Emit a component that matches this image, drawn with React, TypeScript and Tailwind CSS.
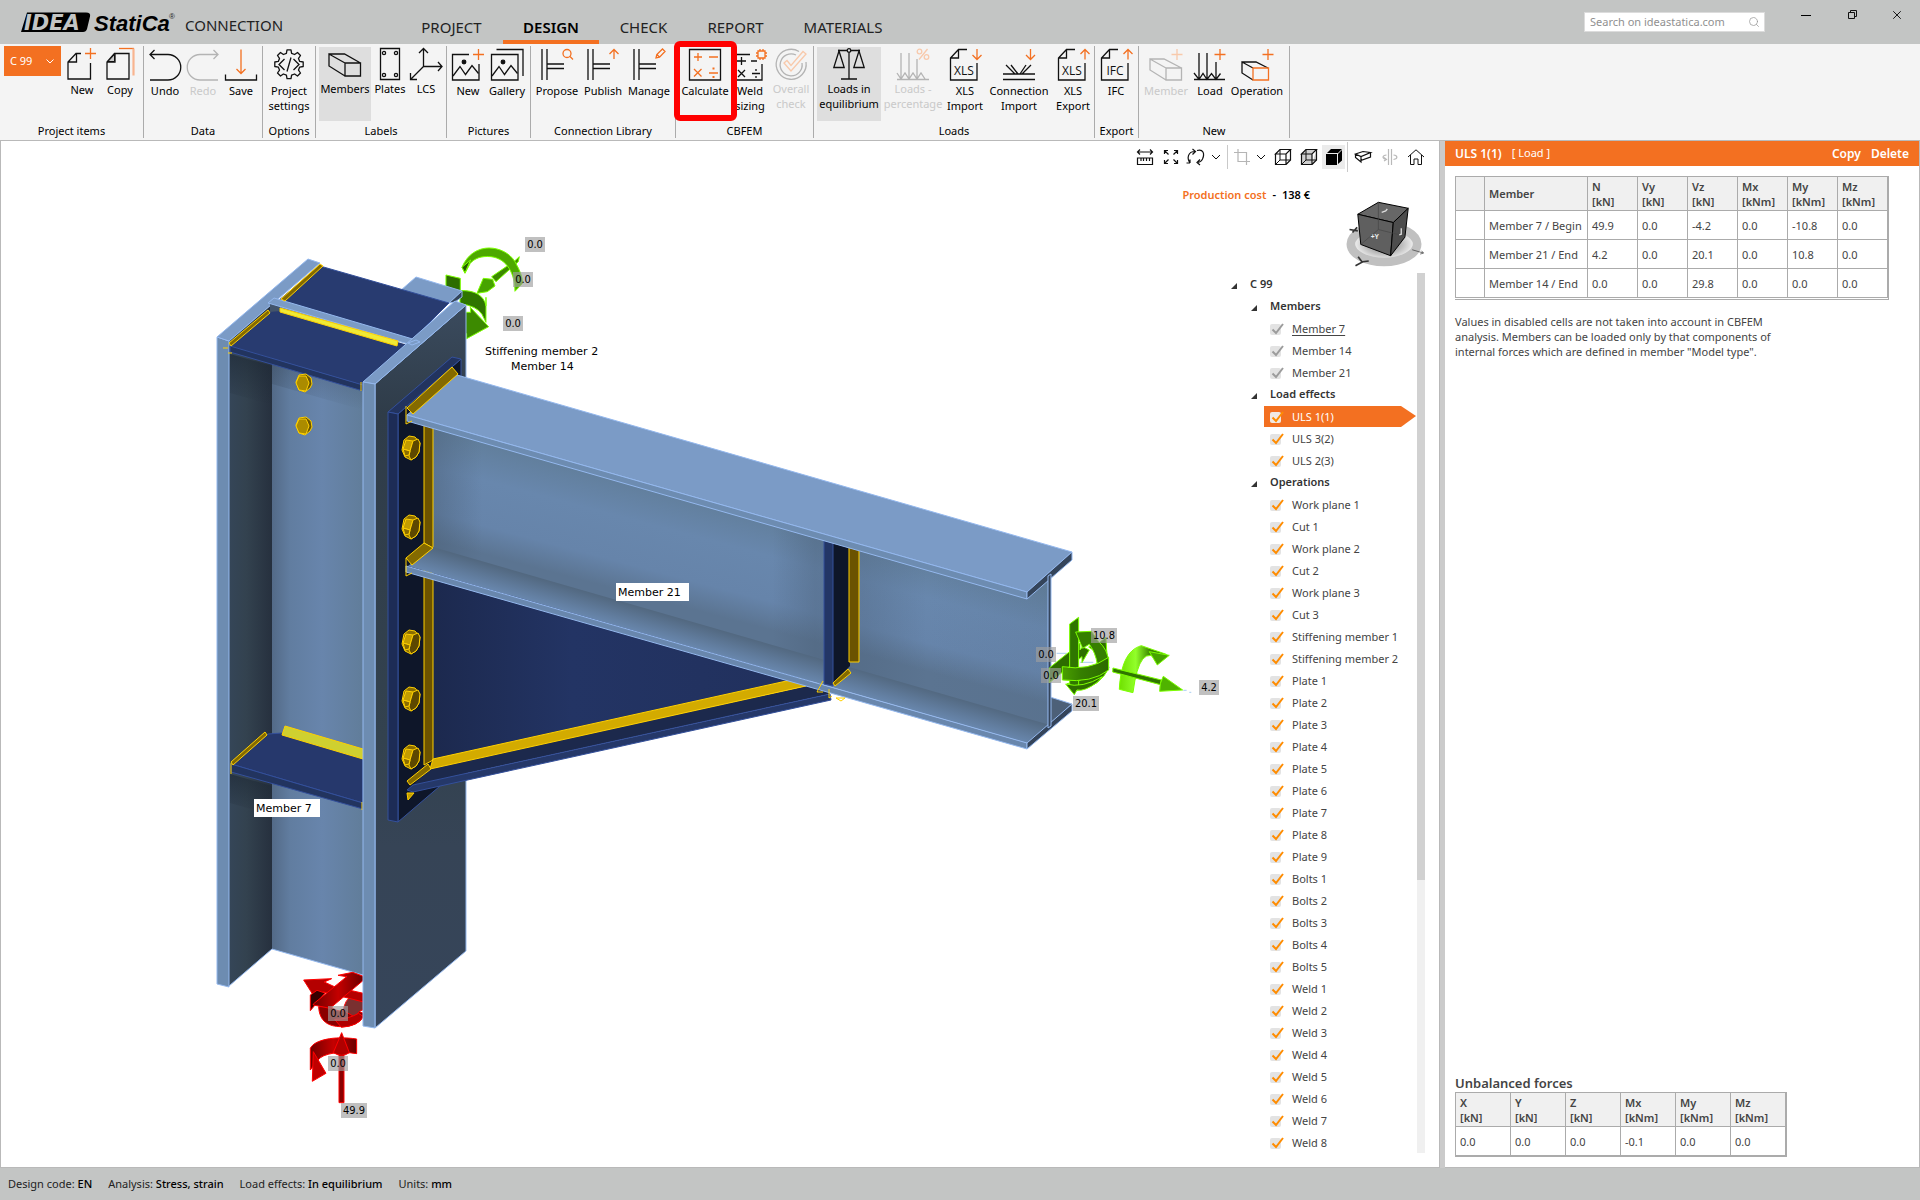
import React from "react";
import { Search, X } from "lucide-react";

const ORANGE = "#f37021";
const PALE = "#f8c9ab";

type Tool = {
  label: string[];
  width: string;
  icon: React.ReactNode;
  disabled?: boolean;
  active?: boolean;
  raised?: boolean;
};

type Group = { name: string; width: string; inset: string; tools: Tool[]; picker?: boolean };

function RibbonIcon({ children, muted }: { children: React.ReactNode; muted?: boolean }) {
  return (
    <svg
      viewBox="0 0 32 32"
      className="h-8 w-8 shrink-0 overflow-visible"
      fill="none"
      stroke={muted ? "#b4b4b4" : "#111"}
      strokeWidth="1.3"
      aria-hidden="true"
    >
      {children}
    </svg>
  );
}

const NewDoc = (
  <RibbonIcon>
    <path d="M15 5.5h-5L2 14v17h22.5V15M10.5 5.5V14H2" />
    <path stroke={ORANGE} d="M24.5 0v11M19 5.5h11" />
  </RibbonIcon>
);
const CopyDoc = (
  <RibbonIcon>
    <path d="M10.5 5.5H25V31H3V14zM11 5.5V14H3.5" />
    <path fill="#c9c9c9" strokeWidth="1" d="M10.5 6.5V13.5H4z" />
    <path stroke={ORANGE} d="M15 .5h15" />
    <path stroke="#f8b48f" strokeWidth="2.2" d="M29.5 .5v27" />
  </RibbonIcon>
);
const Undo = (
  <RibbonIcon>
    <path d="M1 5.5h18A12.75 12.75 0 0 1 19 31H1M5.5 1 1 5.5 5.5 10" />
  </RibbonIcon>
);
const Redo = (
  <RibbonIcon muted>
    <path d="M31 5.5H13A12.75 12.75 0 0 0 13 31H31M26.5 1 31 5.5 26.5 10" />
  </RibbonIcon>
);
const Save = (
  <RibbonIcon>
    <path d="M.5 25.5V31h31v-5.5" />
    <path stroke={ORANGE} d="M16 .5v24M11.5 20l4.5 4.5 4.5-4.5" />
  </RibbonIcon>
);
const Gear = (
  <RibbonIcon>
    <path
      strokeLinejoin="round"
      d="M13.4 4.3 14 .8h4l.6 3.5 3 1.2L24.5 3.5l3 3-2 2.9 1.2 3 3.5.6v4.5l-3.5.6-1.2 3 2 2.9-3 3-2.9-2-3 1.2-.6 3.5h-4l-.6-3.5-3-1.2-2.9 2-3-3 2-2.9-1.2-3-3.5-.6V13l3.5-.6 1.2-3-2-2.9 3-3 2.9 2z"
    />
    <path d="m11.5 10-5.5 5.5 5.5 5.5M20.5 10l5.5 5.5-5.5 5.5M18 8.5l-4 14" />
  </RibbonIcon>
);
const BeamIcon = (
  <RibbonIcon>
    <path d="M16 14h15.5v13H16zM16 14 0 5v12l16 10M0 5h15.5l16 9" />
  </RibbonIcon>
);
const Plates = (
  <RibbonIcon>
    <path d="M6.5-.5h19v31h-19z" />
    <circle cx="10" cy="4" r="1.6" />
    <circle cx="22" cy="4" r="1.6" />
    <circle cx="10" cy="26" r="1.6" />
    <circle cx="22" cy="26" r="1.6" />
  </RibbonIcon>
);
const Lcs = (
  <RibbonIcon>
    <path d="M13.5 0v17.5H32M13.5 17.5.5 30.5M9 4l4.5-4.5L18 4M28 13l4 4.5-4 4.5M.5 24v6.5H7" />
  </RibbonIcon>
);
const Mountains = "M1 27l7-9.5 5.5 8 6.5-9 6.5 8";
const NewPicture = (
  <RibbonIcon>
    <path d="M17 5.5H.5V31H27V15" />
    <path d={Mountains} />
    <circle cx="12" cy="13" r="1.8" fill="#111" />
    <path stroke={ORANGE} d="M26.5 0v11M21 5.5h11" />
  </RibbonIcon>
);
const Gallery = (
  <RibbonIcon>
    <path d="M.5 5.5H27V31H.5zM5.5 .5H32V27" />
    <path d={Mountains} />
    <circle cx="12" cy="13" r="1.8" fill="#111" />
  </RibbonIcon>
);
const Rails = "M1 0v31M6 0v31M6 15h17M6 19.5h17";
const Propose = (
  <RibbonIcon>
    <path d={Rails} />
    <circle cx="26" cy="4.5" r="4" stroke={ORANGE} />
    <path stroke={ORANGE} d="m29 7.5 3 3" />
  </RibbonIcon>
);
const Publish = (
  <RibbonIcon>
    <path d={Rails} />
    <path stroke={ORANGE} d="M27 10V.5M22.5 5 27 .5 31.5 5" />
  </RibbonIcon>
);
const Manage = (
  <RibbonIcon>
    <path d={Rails} />
    <path stroke={ORANGE} d="m23 9 .8-3.5L29.5 0l2.5 2.5-5.5 5.7zM24 5.5l2.5 2.7" />
  </RibbonIcon>
);
const Calculate = (
  <RibbonIcon>
    <path d="M.5 .5H31.5V31H.5z" />
    <g stroke={ORANGE}>
      <path d="M5 8h8M9 4v8M20 8h9M5 20l7.5 7.5M12.5 20 5 27.5M20 24h9" />
      <path d="M24.500 18.500v2M24.500 27v2" strokeWidth="2" />
    </g>
  </RibbonIcon>
);
const WeldSizing = (
  <RibbonIcon>
    <path d="M2 5.5h14M28 15v16H3M3 12h9M7.5 8v8M17 12h6M4 21l7 7M11 21l-7 7M18 24.5h8M22 20v2M22 27v2" />
    <path
      stroke={ORANGE}
      d="M24 2h7v7h-7zM26 2V0M29 2V0M26 9v2M29 9v2M24 4h-2M24 7h-2M31 4h2M31 7h2"
    />
  </RibbonIcon>
);
const Overall = (
  <RibbonIcon muted>
    <path d="M24 2.5A15 15 0 1 0 31 13M21 6A11 11 0 1 0 27 14" />
    <path stroke={PALE} d="m9 14 3-2.5 4 5L28 2.5l3 2.5-15 17z" />
  </RibbonIcon>
);
const Balance = (
  <RibbonIcon>
    <circle cx="16" cy="1.5" r="1.8" />
    <path d="M16 3.5V30M8 30h16M14 1.5H5M18 1.5h9M6 2 .8 18.5h10.4zM26 2l-5.2 16.5h10.4z" />
  </RibbonIcon>
);
const Percentage = (
  <RibbonIcon muted>
    <path d="M4 4v26M12 4v26M20 10v20M0 24l4 6 4-6 4 6 4-6 4 6 4-6 4 6M0 30.5h32" />
    <g stroke={PALE}>
      <circle cx="22.5" cy="2.5" r="2.3" />
      <circle cx="29.5" cy="8" r="2.3" />
      <path d="M30.5 0 22 10.5" />
    </g>
  </RibbonIcon>
);
function SheetIcon({ text, up }: { text: string; up?: boolean }) {
  return (
    <RibbonIcon>
      <path d="M18 .5h-8.5L1.500 9v22H28V14M9.5 .5V9h-8" />
      <path
        stroke={ORANGE}
        d={up ? "M28 10.5V.5M23.5 5 28 .5l4.5 4.5" : "M28 0v10.5M23.5 6l4.5 4.5L32.500 6"}
      />
      <text
        x="15"
        y="26"
        textAnchor="middle"
        fill="#111"
        stroke="none"
        className="font-['Open_Sans'] text-[12px]"
      >
        {text}
      </text>
    </RibbonIcon>
  );
}
const ConnImport = (
  <RibbonIcon>
    <path d="M0 25h32M0 30.5h32M3 16l9 9M8 16l7 9M28 16l-9 9M23 16l-6 9" />
    <path stroke={ORANGE} d="M27.5 0v10.500M23 6l4.5 4.5L32 6" />
  </RibbonIcon>
);
const NewMember = (
  <RibbonIcon muted>
    <path d="M16 19h15.5v12H16zM16 19 0 10v11l16 10M0 10h14l17.5 9" />
    <path stroke={PALE} d="M27 0v11M21.5 5.5h11" />
  </RibbonIcon>
);
const NewLoad = (
  <RibbonIcon>
    <path d="M5 4v26M13 4v26M22 13v17M0 24l5 6.5 4-6 4 6 4.5-6 4.5 6 4.5-6M0 30.5h31" />
    <path stroke={ORANGE} d="M26 0v11M20.5 5.5h11" />
  </RibbonIcon>
);
const NewOperation = (
  <RibbonIcon>
    <path d="m12 19-11-6v11l11 7M1 13h14l12 6" />
    <path stroke={ORANGE} d="M12 19h15.5v12H12zM27 0v11M21.5 5.5h11" />
  </RibbonIcon>
);

const groups: Group[] = [
  {
    name: "Project items",
    width: "w-36",
    inset: "pl-1",
    picker: true,
    tools: [
      { label: ["New"], width: "w-[38px]", icon: NewDoc },
      { label: ["Copy"], width: "w-[38px]", icon: CopyDoc },
    ],
  },
  {
    name: "Data",
    width: "w-[119px]",
    inset: "pl-[2px]",
    tools: [
      { label: ["Undo"], width: "w-[38px]", icon: Undo },
      { label: ["Redo"], width: "w-[38px]", icon: Redo, disabled: true },
      { label: ["Save"], width: "w-[38px]", icon: Save },
    ],
  },
  {
    name: "Options",
    width: "w-[53px]",
    inset: "pl-px",
    tools: [{ label: ["Project", "settings"], width: "w-[50px]", icon: Gear }],
  },
  {
    name: "Labels",
    width: "w-[131px]",
    inset: "pl-[3px]",
    tools: [
      { label: ["Members"], width: "w-[52px]", icon: BeamIcon, active: true, raised: true },
      { label: ["Plates"], width: "w-[38px]", icon: Plates, raised: true },
      { label: ["LCS"], width: "w-[34px]", icon: Lcs, raised: true },
    ],
  },
  {
    name: "Pictures",
    width: "w-[84px]",
    inset: "pl-[2px]",
    tools: [
      { label: ["New"], width: "w-[38px]", icon: NewPicture },
      { label: ["Gallery"], width: "w-[40px]", icon: Gallery },
    ],
  },
  {
    name: "Connection Library",
    width: "w-[145px]",
    inset: "pl-[3px]",
    tools: [
      { label: ["Propose"], width: "w-[46px]", icon: Propose },
      { label: ["Publish"], width: "w-[46px]", icon: Publish },
      { label: ["Manage"], width: "w-[46px]", icon: Manage },
    ],
  },
  {
    name: "CBFEM",
    width: "w-[138px]",
    inset: "pl-[3px]",
    tools: [
      { label: ["Calculate"], width: "w-[52px]", icon: Calculate },
      { label: ["Weld", "sizing"], width: "w-[38px]", icon: WeldSizing },
      { label: ["Overall", "check"], width: "w-[44px]", icon: Overall, disabled: true, raised: true },
    ],
  },
  {
    name: "Loads",
    width: "w-[281px]",
    inset: "pl-[3px]",
    tools: [
      { label: ["Loads in", "equilibrium"], width: "w-[64px]", icon: Balance, active: true, raised: true },
      { label: ["Loads -", "percentage"], width: "w-[64px]", icon: Percentage, disabled: true, raised: true },
      { label: ["XLS", "Import"], width: "w-[40px]", icon: <SheetIcon text="XLS" /> },
      { label: ["Connection", "Import"], width: "w-[68px]", icon: ConnImport },
      { label: ["XLS", "Export"], width: "w-[40px]", icon: <SheetIcon text="XLS" up /> },
    ],
  },
  {
    name: "Export",
    width: "w-[44px]",
    inset: "pl-px",
    tools: [{ label: ["IFC"], width: "w-[40px]", icon: <SheetIcon text="IFC" up /> }],
  },
  {
    name: "New",
    width: "w-[151px]",
    inset: "pl-1",
    tools: [
      { label: ["Member"], width: "w-[46px]", icon: NewMember, disabled: true },
      { label: ["Load"], width: "w-[42px]", icon: NewLoad },
      { label: ["Operation"], width: "w-[52px]", icon: NewOperation },
    ],
  },
];

function ToolButton({ tool }: { tool: Tool }) {
  return (
    <button
      type="button"
      disabled={tool.disabled}
      className={`flex h-[74px] shrink-0 flex-col items-center pt-[2px] ${tool.width} ${
        tool.active ? "bg-[#dedede]" : ""
      } ${tool.raised ? "gap-0" : "gap-[2px]"}`}
    >
      {tool.icon}
      <span
        className={`text-center leading-[15px] whitespace-nowrap ${
          tool.disabled ? "text-[#c9c9c9]" : "text-black"
        }`}
      >
        {tool.label.map((line) => (
          <span key={line} className="block">
            {line}
          </span>
        ))}
      </span>
    </button>
  );
}

function Ribbon() {
  return (
    <nav aria-label="Ribbon" className="flex h-24 shrink-0 bg-[#f4f4f4] pt-[2px] text-[11px]">
      {groups.map((g, i) => (
        <section
          key={i}
          aria-label={g.name}
          className={`flex h-[92px] shrink-0 flex-col justify-between border-r border-[#ababab] ${g.width}`}
        >
          <div className={`relative flex ${g.inset} ${g.picker ? "" : "pt-px"}`}>
            {g.picker && (
              <button
                type="button"
                className="mr-[2px] flex h-[30px] w-[57px] items-center justify-between bg-[#f37021] pr-[7px] pl-[6px] text-[11px] text-white"
              >
                C 99
                <svg viewBox="0 0 8 5" className="h-[5px] w-2" fill="none" stroke="white" aria-hidden="true">
                  <path d="m.5 .5 3.5 3.5L7.5 .5" />
                </svg>
              </button>
            )}
            {g.tools.map((t) => (
              <ToolButton key={t.label.join(" ")} tool={t} />
            ))}
            {g.name === "CBFEM" && (
              <div className="pointer-events-none absolute -top-[5px] -left-[2px] h-20 w-[63px] rounded-md border-[6px] border-[#ff0000]" />
            )}
          </div>
          <h2 className="text-center leading-[15px] whitespace-nowrap">{g.name}</h2>
        </section>
      ))}
    </nav>
  );
}

function Logo() {
  return (
    <svg viewBox="0 0 156 24" className="h-6 w-[156px] shrink-0" role="img" aria-label="IDEA StatiCa">
      <path d="M7 2.5h59q5 0 4 4L67 19q-1 3-4 3H1z" fill="#000" />
      <text x="4" y="20" fill="#c3c5c4" className="font-['DejaVu_Sans'] text-[21px] font-bold italic">
        IDEA
      </text>
      <text x="74" y="21" fill="#000" className="font-['Liberation_Sans'] text-[22px] font-bold italic">
        StatiCa
      </text>
      <text x="149" y="9" fill="#222" className="font-['Liberation_Sans'] text-[8px]">
        ®
      </text>
    </svg>
  );
}

const tabs: { name: string; width: string }[] = [
  { name: "PROJECT", width: "w-[103px]" },
  { name: "DESIGN", width: "w-24" },
  { name: "CHECK", width: "w-[89px]" },
  { name: "REPORT", width: "w-[95px]" },
  { name: "MATERIALS", width: "w-[120px]" },
];

function Header() {
  return (
    <header className="flex h-11 shrink-0 items-stretch bg-[#c3c5c4]">
      <div className="flex w-[400px] shrink-0 items-center gap-[9px] pl-5">
        <Logo />
        <h1 className="pt-[6px] text-[15px] leading-5 text-[#222]">CONNECTION</h1>
      </div>
      <div role="tablist" className="flex">
        {tabs.map((t) => (
          <button
            key={t.name}
            type="button"
            role="tab"
            aria-selected={t.name === "DESIGN"}
            className={`border-b-4 pt-[14px] text-[15px] leading-5 text-[#222] ${t.width} ${
              t.name === "DESIGN" ? "border-[#f37021] font-semibold text-black" : "border-transparent"
            }`}
          >
            {t.name}
          </button>
        ))}
      </div>
      <div className="ml-auto flex items-start">
        <label className="mt-3 flex h-5 w-[181px] items-center border border-[#dcdcdc] bg-white pr-1 pl-[5px]">
          <span className="sr-only">Search</span>
          <input
            type="text"
            placeholder="Search on ideastatica.com"
            className="h-[18px] w-0 flex-1 text-[11px] leading-[18px] outline-none placeholder:text-[#909090]"
          />
          <Search size={12} strokeWidth={1.5} className="text-[#999]" />
        </label>
        <button type="button" aria-label="Minimize" className="mt-2 ml-[33px] flex w-4 justify-center">
          <svg viewBox="0 0 10 14" className="h-[14px] w-[10px]" stroke="#000">
            <path d="M0 7.5h10" />
          </svg>
        </button>
        <button type="button" aria-label="Restore" className="mt-2 ml-[30px] flex w-4 justify-center">
          <svg viewBox="0 0 10 14" className="h-[14px] w-[10px]" fill="none" stroke="#111">
            <path d="M1.5 4.5h6v6h-6zM3.5 4.5v-2h6v6h-2" />
          </svg>
        </button>
        <button type="button" aria-label="Close" className="mt-2 mr-[15px] ml-[29px] flex w-4 justify-center">
          <X size={14} strokeWidth={1.5} />
        </button>
      </div>
    </header>
  );
}

/* ---------- 3D scene ---------- */

const EDGE = "#94b8ee";
const NAVY_EDGE = "#34509b";
const GOLD = "#ffd000";

function Poly({ p, f, s, w = 1, o }: { p: string; f: string; s?: string; w?: number; o?: number }) {
  return <polygon points={p} fill={f} stroke={s ?? "none"} strokeWidth={w} opacity={o} />;
}

function RoundBolt({ y }: { y: number }) {
  return (
    <g transform={`translate(304 ${y})`}>
      <Poly p="-8,-1 -5,-8 2,-9 7,-5 8,1 6,5 1,9 -5,7" f="#6a5400" s={GOLD} />
      <Poly p="-8,0 -5,-7 2,-7 5,0 2,8 -5,7" f="#ab8b00" s={GOLD} />
    </g>
  );
}

function HexBolt({ y }: { y: number }) {
  return (
    <g transform={`translate(411 ${y})`}>
      <Poly p="-9,2 -7,-8 -2,-12 4,-11 9,-5 8,4 5,9 0,12 -6,9" f="#8a6d00" s={GOLD} />
      <Poly p="-8,1 -5,-8 2,-7 -1,3" f="#c39d00" s={GOLD} />
      <Poly p="-1,3 2,-7 7,-9 9,-5 8,4 5,9 0,12 -2,8" f="#5d4800" s={GOLD} />
      <Poly p="-8,1 -1,3 -2,7 -6,8" f="#8a6d00" s={GOLD} />
    </g>
  );
}

function ForceTag({ x, y, w = 20, children }: { x: number; y: number; w?: number; children: string }) {
  return (
    <g>
      <rect x={x} y={y} width={w} height="15" fill="#9e9e9e" fillOpacity=".65" />
      <text
        x={x + w / 2}
        y={y + 11}
        textAnchor="middle"
        fill="#000"
        className="font-['DejaVu_Sans_Condensed','DejaVu_Sans'] text-[11px]"
      >
        {children}
      </text>
    </g>
  );
}

function MemberTag({ x, y, w, children }: { x: number; y: number; w?: number; children: string }) {
  return (
    <g>
      {w && <rect x={x - 2} y={y - 13} width={w} height="18" fill="#fff" />}
      <text x={x} y={y} fill="#000" className="font-['DejaVu_Sans'] text-[11px]">
        {children}
      </text>
    </g>
  );
}

function Scene() {
  return (
    <svg
      viewBox="1 141 1240 1026"
      className="absolute top-0 left-0 h-[1026px] w-[1240px]"
      role="img"
      aria-label="Steel connection model"
    >
      <defs>
        <linearGradient id="colWeb" x1="0" x2="1">
          <stop offset="0" stopColor="#536a87" />
          <stop offset=".2" stopColor="#617da0" />
          <stop offset=".55" stopColor="#6885ac" />
          <stop offset="1" stopColor="#617d9a" />
        </linearGradient>
        <linearGradient id="colFlange" x1="0" x2="1">
          <stop offset="0" stopColor="#354658" />
          <stop offset=".4" stopColor="#33424f" />
          <stop offset="1" stopColor="#26303e" />
        </linearGradient>
        <linearGradient id="shade" x1="0" x2="0" y1="0" y2="1">
          <stop offset="0" stopColor="#1c2733" stopOpacity=".6" />
          <stop offset="1" stopColor="#1c2733" stopOpacity="0" />
        </linearGradient>
        <linearGradient id="outer" x1="0" x2="0" y1="0" y2="1">
          <stop offset="0" stopColor="#3b4b5e" />
          <stop offset=".15" stopColor="#2f3c49" />
          <stop offset=".6" stopColor="#33424f" />
          <stop offset=".75" stopColor="#364456" />
          <stop offset="1" stopColor="#36455a" />
        </linearGradient>
        <linearGradient id="web" gradientUnits="userSpaceOnUse" x1="640" y1="482" x2="612" y2="588">
          <stop offset="0" stopColor="#617e9b" />
          <stop offset=".35" stopColor="#6887ad" />
          <stop offset=".75" stopColor="#6684aa" />
          <stop offset="1" stopColor="#5b7491" />
        </linearGradient>
        <linearGradient id="webEnds" gradientUnits="userSpaceOnUse" x1="433" y1="0" x2="1050" y2="0">
          <stop offset="0" stopColor="#4b6078" stopOpacity=".5" />
          <stop offset=".08" stopColor="#4b6078" stopOpacity="0" />
          <stop offset=".55" stopColor="#4b6078" stopOpacity="0" />
          <stop offset=".62" stopColor="#4b6078" stopOpacity=".4" />
          <stop offset=".7" stopColor="#4b6078" stopOpacity=".3" />
          <stop offset=".8" stopColor="#4b6078" stopOpacity="0" />
          <stop offset="1" stopColor="#4b6078" stopOpacity=".1" />
        </linearGradient>
        <linearGradient id="lowFlange" gradientUnits="userSpaceOnUse" x1="640" y1="607" x2="632" y2="635">
          <stop offset="0" stopColor="#526880" />
          <stop offset="1" stopColor="#6d8db6" />
        </linearGradient>
        <linearGradient id="haunch" x1="0" x2="1">
          <stop offset="0" stopColor="#1c294e" />
          <stop offset=".35" stopColor="#233464" />
          <stop offset="1" stopColor="#21305c" />
        </linearGradient>
        <linearGradient id="green" x1="0" x2="1">
          <stop offset="0" stopColor="#4a9f00" />
          <stop offset=".4" stopColor="#357f00" />
          <stop offset="1" stopColor="#2c6a00" />
        </linearGradient>
        <linearGradient id="greenHoop" x1="0" x2="1">
          <stop offset="0" stopColor="#6fe000" />
          <stop offset=".35" stopColor="#92ff2a" />
          <stop offset=".65" stopColor="#3c8a00" />
          <stop offset="1" stopColor="#2c6a00" />
        </linearGradient>
        <linearGradient id="red" x1="0" x2="1">
          <stop offset="0" stopColor="#700000" />
          <stop offset=".5" stopColor="#c40000" />
          <stop offset="1" stopColor="#6a0000" />
        </linearGradient>
      </defs>

      {/* load arrows behind the column */}
      <g transform="translate(200 230) scale(.3333)" stroke="#7cff00" strokeWidth="3" strokeLinejoin="round">
        <path d="M738 135l43 10v60l-43-12z" fill="#2d6d00" />
        <path d="M945 92 958 80 955 95 888 155 875 140z" fill="#3c8a00" />
        <path d="M831 190 850 145 878 148 885 168 862 185z" fill="#47a300" />
        <path d="M786 112C820 30 915 45 945 95q26 45 22 66l-22 23c0-50-22-98-72-104-30-3-50 6-62 20l-16 30z" fill="#4da900" />
        <path d="M786 112 812 90 795 128z" fill="#255900" />
        <path d="M780 182c45-2 72 15 78 45v-25 75l-12-24q-15-25-66-32z" fill="#2f7600" />
        <path d="M796 247h16l-1-15 55 58-66 36v-15h-10z" fill="#3c8a00" />
      </g>

      {/* member 14 behind the column */}
      <Poly p="400,291 416,277 462,291 449,303" f="#7b9bc6" s={EDGE} />
      <Poly p="449,303 462,291 462,297 455,302" f="#34445a" s={EDGE} />

      {/* column, left flange and web */}
      <Poly p="229,341 272,304 272,949 229,986" f="url(#colFlange)" />
      <Poly p="272,300 363,330 363,975 272,949" f="url(#colWeb)" />
      <path d="M229 986 272 949 363 975" fill="none" stroke={EDGE} />
      <Poly p="230,354 272,366 272,405 230,393" f="url(#shade)" />
      <Poly p="230,774 272,786 272,815 230,803" f="url(#shade)" />
      <Poly p="272,364 363,391 363,410 272,384" f="url(#shade)" o={0.4} />
      <Poly p="217,337 229,341 229,987 217,984" f="#6d8cb1" s={EDGE} />
      <Poly p="217,337 308,259 320,263 229,341" f="#7b9bc6" s={EDGE} />

      {/* top stiffeners */}
      <Poly p="320,266 449,303 412,340 278,301" f="#283b70" s={NAVY_EDGE} />
      <Poly p="268,311 282,309 408,345 363,385 230,346" f="#283b70" />
      <Poly p="230,346 363,385 363,391 230,352" f="#22345f" s={NAVY_EDGE} />
      <Poly p="270,304 280,303 280,311 270,312" f="#43546b" />
      <Poly p="274,298 416,340 408,344 268,303" f="#7b9bc6" s={EDGE} />
      <Poly p="320,264 323,266 285,301 281,299" f="#846a00" s={GOLD} />
      <Poly p="229,343 268,310 270,313 231,346" f="#846a00" s={GOLD} />
      <Poly p="280,308 398,341 397,346 280,312" f="#f0ea35" s={GOLD} />
      <path d="M223 348h5M228 353h4M361 382v9M366 388h4" stroke={GOLD} fill="none" />

      <RoundBolt y={383} />
      <RoundBolt y={426} />

      {/* lower stiffener */}
      <Poly p="231,764 268,734 282,733 363,757 363,803" f="#26386c" s={NAVY_EDGE} />
      <Poly p="231,764 363,803 363,809 231,772" f="#22345f" s={NAVY_EDGE} />
      <Poly p="231,762 265,732 267,735 233,765" f="#846a00" s={GOLD} />
      <Poly p="285,726 363,749 363,759 282,735" f="#cfd030" s={GOLD} />
      <path d="M231 763v11M362 802v8" stroke={GOLD} />

      {/* reaction arrows */}
      <g transform="translate(200 880) scale(.3333)" stroke="#ff0000" strokeWidth="3" strokeLinejoin="round">
        <path d="M356 380c2 45 30 60 68 60 45 0 66-22 66-40l-48-22q-15 30-50 2z" fill="#8a0000" />
        <path d="M430 392q5-35 25-42l35 14v25q-20 5-20 25z" fill="#7a3030" />
        <path d="M404 418q40 0 72-18l14 10q-14 28-66 32z" fill="#b00000" />
        <path d="M311 300l84-4-22 10 30 14 87 20v26l-62-16-58-14-25 18-5-8z" fill="#b40000" />
        <path d="M331 392v-47l20-14 24 8z" fill="#380000" />
        <path d="M340 372 440 290l-26-4 44-9 32 12v12l-100 84-50-10z" fill="url(#red)" />
        <path d="M331 570v-65c12-25 70-38 139-28v44c-50-8-100-2-117 20z" fill="url(#red)" />
        <path d="M340 515 378 580 337 604z" fill="#c00000" />
        <path d="M417 520h15v148h-15z" fill="#8c0000" />
        <path d="M425 458 448 518q-22 16-48 0z" fill="#b00000" />
      </g>

      {/* column, right flange */}
      <Poly p="375,384 466,305 466,951 375,1028" f="url(#outer)" s={EDGE} />
      <Poly p="363,382 455,301 466,305 375,384" f="#7b9bc6" s={EDGE} />
      <Poly p="363,382 375,384 375,1028 363,1026" f="#6d8cb1" s={EDGE} />
      <Poly p="408,343 416,340 420,342 412,345" f="#7b9bc6" s={EDGE} />

      {/* end plate */}
      <Poly p="398,414 461,359 461,768 398,822" f="#0e1629" s={NAVY_EDGE} />
      <Poly p="388,412 452,357 461,359 398,414" f="#22335f" s={NAVY_EDGE} />
      <Poly p="388,412 398,414 398,822 388,820" f="#1d2c56" s={NAVY_EDGE} />

      {/* haunch */}
      <Poly p="433,570 830,685 815,680 433,762" f="url(#haunch)" />
      <Poly p="430,768 820,683 830,694 413,785" f="#1c294c" />
      <Poly p="413,785 830,694 831,700 413,792 407,790" f="#253869" s={NAVY_EDGE} />
      <Poly p="424,570 433,573 433,760 424,765" f="#6b5300" s={GOLD} />
      <Poly p="433,759 800,678 806,686 430,769" f="#d3ab00" s={GOLD} />
      <Poly p="407,781 428,764 431,769 410,785" f="#846a00" s={GOLD} />
      <Poly p="407,793 414,793 408,800" f="#c39d00" s={GOLD} />

      {/* beam web */}
      <Poly p="433,425 1027,590 1050,572 1050,726 433,548" f="url(#web)" />
      <Poly p="433,425 1027,590 1050,572 1050,726 433,548" f="url(#webEnds)" />
      <Poly p="424,420 433,423 433,548 424,543" f="#6b5300" s={GOLD} />

      {/* beam bottom flange */}
      <Poly p="1050,697 1072,704 1049,725" f="#4d6078" s={EDGE} />
      <Poly p="408,566 433,547 1050,725 1027,743" f="url(#lowFlange)" />
      <Poly p="406,566 1027,743 1027,749 406,572" f="#6987ad" s={EDGE} />
      <Poly p="1027,743 1072,704 1072,711 1027,749" f="#34445a" s={EDGE} />
      <Poly p="406,558 424,543 433,548 412,565" f="#846a00" s={GOLD} />
      <path d="M406 558v18l6-3" stroke={GOLD} fill="none" />

      {/* beam stiffener */}
      <Poly p="833,541 850,546 850,666 833,684" f="#0e1629" />
      <Poly p="849,546 859,549 859,662 849,662" f="#6b5300" s={GOLD} />
      <Poly p="824,540 833,542 833,686 824,684" f="#233666" s={NAVY_EDGE} />
      <Poly p="833,683 848,669 851,673 835,686" f="#846a00" s={GOLD} />
      <path d="M823 681l-6 11h6M829 689v9l3-2M836 698h9l-4 3z" stroke={GOLD} fill="none" />

      {/* beam top flange */}
      <Poly p="407,415 457,375 1072,552 1027,592" f="#7b9bc6" s={EDGE} />
      <Poly p="407,415 1027,592 1027,599 407,421" f="#6d8cb1" s={EDGE} />
      <Poly p="1027,592 1072,552 1072,560 1027,599" f="#34445a" s={EDGE} />
      <Poly p="1048,576 1051,574 1051,726 1048,728" f="#34445a" s={EDGE} />
      <Poly p="407,408 452,367 458,374 413,414" f="#846a00" s={GOLD} />
      <path d="M406 406v18l6-3" stroke={GOLD} fill="none" />

      <HexBolt y={448} />
      <HexBolt y={527} />
      <HexBolt y={642} />
      <HexBolt y={699} />
      <HexBolt y={757} />

      {/* beam end loads */}
      <g transform="translate(780 500) scale(.3333)" stroke="#7cff00" strokeWidth="3" strokeLinejoin="round">
        <path d="M830 460h30M900 487h40M970 502h20M1210 571h10M1228 577h6" stroke="#a9cdf0" />
        <path d="M808 504 900 430v20l8-10 20 10-22 38v-18l-98 78z" fill="#2d6d00" />
        <path d="M955 430 978 412 980 450 986 505q-25 55-95 66l-30-20q60-5 90-60 12-30-25-50z" fill="#2d6d00" />
        <path d="M869 372 896 352V560h-27z" fill="#2f7600" />
        <path d="M887 396l48-2 20 30q30 25 31 65l-34 4q-5-35-24-60l-20 12z" fill="#357f00" />
        <path d="M847 500q80 14 139-28v38q-50 40-139 30z" fill="url(#green)" />
        <path d="M857 552q50 14 110-22l-14 16q-40 30-62 24l-8 14z" fill="#2d6d00" />
        <path d="M1018 568c4-70 22-118 66-131l75 26-20 20q-60-60-80 95z" fill="url(#greenHoop)" />
        <path d="M1108 455l60 11-36 29z" fill="#47a300" />
        <path d="M999 504l145 36-3 14-143-38z" fill="#2f7600" />
        <path d="M1150 529l58 41-69 4q-1-25 11-45z" fill="#4fb300" />
      </g>

      <ForceTag x={525} y={237}>0.0</ForceTag>
      <ForceTag x={513} y={272}>0.0</ForceTag>
      <ForceTag x={503} y={316}>0.0</ForceTag>
      <ForceTag x={1036} y={647}>0.0</ForceTag>
      <ForceTag x={1041} y={668}>0.0</ForceTag>
      <ForceTag x={1091} y={628} w={26}>10.8</ForceTag>
      <ForceTag x={1073} y={696} w={26}>20.1</ForceTag>
      <ForceTag x={1199} y={680}>4.2</ForceTag>
      <ForceTag x={328} y={1006}>0.0</ForceTag>
      <ForceTag x={328} y={1056}>0.0</ForceTag>
      <ForceTag x={341} y={1103} w={26}>49.9</ForceTag>

      <MemberTag x={485} y={355}>Stiffening member 2</MemberTag>
      <MemberTag x={511} y={370}>Member 14</MemberTag>
      <MemberTag x={618} y={596} w={73}>Member 21</MemberTag>
      <MemberTag x={256} y={812} w={66}>Member 7</MemberTag>
    </svg>
  );
}

/* ---------- view toolbar ---------- */

function ViewButton({
  label,
  width,
  active,
  children,
}: {
  label: string;
  width: string;
  active?: boolean;
  children: React.ReactNode;
}) {
  return (
    <button
      type="button"
      aria-label={label}
      className={`flex h-6 items-center justify-center ${width} ${active ? "bg-[#ebebeb]" : ""}`}
    >
      <svg viewBox="0 0 16 16" className="h-4 w-4 overflow-visible" fill="none" stroke="#111" strokeWidth="1.2" aria-hidden="true">
        {children}
      </svg>
    </button>
  );
}

const CubeLines = "M.5 5 5 .5h10.5L11 5zM11 5v10.5H.5V5M11 15.5l4.5-4.5V.5";

function ViewToolbar() {
  return (
    <div className="relative flex h-8 items-center pr-[10px]">
      <ViewButton label="Measure" width="w-[26px]">
        <path d="M0 3h16M3 .5.5 3 3 5.5M13 .5 15.5 3 13 5.5M.5 9h15v6.5H.5zM4 9v3M6.5 9v3M9.5 9v3M12.5 9v3" />
      </ViewButton>
      <ViewButton label="Fit to window" width="w-[26px]">
        <path d="M1.500 5v-3.500h3.500M1.500 1.500l4 4M11 1.500h3.500v3.500M14.500 1.500l-4 4M1.500 11v3.500h3.500M1.500 14.500l4-4M14.500 11v3.500h-3.500M14.500 14.500l-4-4" />
      </ViewButton>
      <ViewButton label="Rotate" width="w-[23px]">
        <path d="M2 14C-1.500 9 0 2.500 7 2.500M4.500 0l3 2.500L4.500 5.500M9 1.500c6-2 8 3 5.500 8.500-1 2-3 3.500-5.500 3.500M2 14H-1.500M2 14v-3.500M12 16l-3-2.500 3-3" />
      </ViewButton>
      <ViewButton label="Rotate options" width="w-[18px]">
        <path strokeWidth="1" d="m4 6 4 4 4-4" />
      </ViewButton>
      <span className="mr-[2px] ml-[2px] h-6 w-px bg-[#c9c9c9]" />
      <ViewButton label="Clip" width="w-[24px]">
        <path stroke="#b5b5b5" d="M4 0v12.5h12M0 3.500h12.5V16" />
      </ViewButton>
      <ViewButton label="Clip options" width="w-[16px]">
        <path strokeWidth="1" d="m3 6 4 4 4-4" />
      </ViewButton>
      <ViewButton label="Wireframe" width="w-[26px]">
        <path d={CubeLines} />
        <path strokeWidth="1" d="M5 .5V11H15.5M5 11 .5 15.5" />
      </ViewButton>
      <ViewButton label="Transparent" width="w-[26px]">
        <path fill="#d0d0d0" d={CubeLines} />
        <path strokeWidth="1" d="M5 .5V11H15.5M5 11 .5 15.5" />
      </ViewButton>
      <ViewButton label="Solid" width="w-[23px]" active>
        <path fill="#000" stroke="none" d="M0 5h11v11H0zM1 4 5 0h11l-4 4zM12 5l4-4v10.5L12 15z" />
      </ViewButton>
      <span className="ml-[2px] h-[30px] w-px bg-[#c9c9c9]" />
      <ViewButton label="Member view" width="w-[29px]">
        <path d="M.5 5 8 2.500l7.500 1L6 7.500zM6 7.500V13L.5 8.500V5M6 13v-1.500l9.500-3.500V3.500" />
      </ViewButton>
      <ViewButton label="Mirror" width="w-[25px]">
        <path stroke="#b9b9b9" d="M6.5 0v16M9.5 0v16M4.500 6C.5 6.500-.5 9 4 10.500M11.500 6c4 .5 5 3.500 0 4.500M2 12l2.500-1.500L2 8.500" />
      </ViewButton>
      <ViewButton label="Home" width="w-[27px]">
        <path strokeWidth="1" d="M0 8 8 .8 16 8M2.5 6v9.500H6V10h4v5.500h3.5V6" />
      </ViewButton>
    </div>
  );
}

function NavCube() {
  return (
    <svg viewBox="675 210 240 205" className="-mt-1 mr-[14px] h-[68px] w-20" role="img" aria-label="Orientation cube">
      <defs>
        <radialGradient id="floor">
          <stop offset=".3" stopColor="#999" />
          <stop offset="1" stopColor="#fff" />
        </radialGradient>
      </defs>
      <ellipse cx="792" cy="346" rx="100" ry="54" fill="url(#floor)" stroke="#c0c0c0" strokeWidth="26" />
      <g stroke="#000" strokeWidth="3" strokeLinejoin="round">
        <path d="M713 256 775 220l90 18-45 43z" fill="#676767" />
        <path d="M713 256l107 25-8 100-90-34z" fill="#5f5f5f" />
        <path d="M820 281l45-43-10 87-43 56z" fill="#4d4d4d" />
      </g>
      <path d="M775 220v82l-53 45M775 302l80 20" stroke="#444" strokeWidth="2" fill="none" />
      <text x="752" y="330" fill="#eee" className="font-['Liberation_Sans'] text-[20px] font-bold">+Y</text>
      <path d="M838 318l6-2v-18M785 250l12-4 5-6" stroke="#ddd" strokeWidth="4" fill="none" />
      <path d="M688 302l25 4M697 311l14-16M706 411l22-12 18-2M714 384l12 16" stroke="#333" strokeWidth="5" fill="none" />
      <path d="M877 363l34 10-6-7M911 373l-10 3" stroke="#333" strokeWidth="2" fill="none" />
    </svg>
  );
}

/* ---------- model tree ---------- */

type Item = { name: string; state?: "locked" | "selected"; underlined?: boolean };

const series = (name: string, n: number): Item[] =>
  Array.from({ length: n }, (_, i) => ({ name: `${name} ${i + 1}` }));

const sections: { name: string; items: Item[] }[] = [
  {
    name: "Members",
    items: [
      { name: "Member 7", state: "locked", underlined: true },
      { name: "Member 14", state: "locked" },
      { name: "Member 21", state: "locked" },
    ],
  },
  {
    name: "Load effects",
    items: [{ name: "ULS 1(1)", state: "selected" }, { name: "ULS 3(2)" }, { name: "ULS 2(3)" }],
  },
  {
    name: "Operations",
    items: [
      { name: "Work plane 1" },
      { name: "Cut 1" },
      { name: "Work plane 2" },
      { name: "Cut 2" },
      { name: "Work plane 3" },
      { name: "Cut 3" },
      ...series("Stiffening member", 2),
      ...series("Plate", 9),
      ...series("Bolts", 5),
      ...series("Weld", 8),
    ],
  },
];

function Expander() {
  return (
    <svg viewBox="0 0 6 6" className="mt-1 h-[6px] w-[6px]" aria-hidden="true">
      <path d="M6 0v6H0z" fill="#333" />
    </svg>
  );
}

function TreeItem({ item }: { item: Item }) {
  const selected = item.state === "selected";
  const locked = item.state === "locked";
  return (
    <li className="h-[22px] pl-[33px]">
      <label
        className={`flex h-[22px] items-center gap-[11px] pt-[3px] pl-[6px] ${
          selected
            ? "w-[152px] bg-[#f37021] text-white [clip-path:polygon(0_1px,137px_1px,100%_50%,137px_100%,0_100%)]"
            : "text-[#444]"
        }`}
      >
        <span className="relative flex">
          <input
            type="checkbox"
            defaultChecked
            disabled={locked}
            className={`h-[11px] w-[11px] appearance-none rounded-[2px] ${selected ? "bg-[#f1e9e3]" : "bg-[#e3e3e3]"}`}
          />
          <svg
            viewBox="0 0 13 12"
            className="pointer-events-none absolute -top-px left-[1px] h-3 w-[13px]"
            fill="none"
            stroke={locked ? "#9c9c9c" : "#ff8c00"}
            strokeWidth="2"
            aria-hidden="true"
          >
            <path d="M1.5 6.5 5 10 12 1" />
          </svg>
        </span>
        <span className={item.underlined ? "underline underline-offset-2" : ""}>{item.name}</span>
      </label>
    </li>
  );
}

function ModelTree() {
  return (
    <div className="flex w-[208px] justify-between pt-[6px] pr-[14px] text-[11px]">
      <div className="w-[185px]">
        <h2 className="flex h-[22px] items-center gap-[13px] font-semibold text-[#333]">
          <Expander />C 99
        </h2>
        {sections.map((s) => (
          <section key={s.name}>
            <h3 className="flex h-[22px] items-center gap-[13px] pl-5 font-semibold text-[#333]">
              <Expander />
              {s.name}
            </h3>
            <ul>
              {s.items.map((it) => (
                <TreeItem key={it.name} item={it} />
              ))}
            </ul>
          </section>
        ))}
      </div>
      <div className="w-2 bg-[#f0f0f0]">
        <div className="h-[69%] bg-[#d1d1d1]" />
      </div>
    </div>
  );
}

/* ---------- load panel ---------- */

const loadColumns = ["N [kN]", "Vy [kN]", "Vz [kN]", "Mx [kNm]", "My [kNm]", "Mz [kNm]"];
const loadRows = [
  ["Member 7 / Begin", "49.9", "0.0", "-4.2", "0.0", "-10.8", "0.0"],
  ["Member 21 / End", "4.2", "0.0", "20.1", "0.0", "10.8", "0.0"],
  ["Member 14 / End", "0.0", "0.0", "29.8", "0.0", "0.0", "0.0"],
];
const unbalancedColumns = ["X [kN]", "Y [kN]", "Z [kN]", "Mx [kNm]", "My [kNm]", "Mz [kNm]"];
const unbalancedRow = ["0.0", "0.0", "0.0", "-0.1", "0.0", "0.0"];

function UnitHead({ text, width }: { text: string; width: string }) {
  const [a, b] = text.split(" ");
  return (
    <th scope="col" className={`border border-[#ababab] p-0 pl-1 text-left leading-[15px] font-semibold ${width}`}>
      {a}
      <br />
      {b}
    </th>
  );
}

function LoadPanel() {
  return (
    <aside className="flex w-[475px] shrink-0 flex-col border-r border-b border-[#b9b9b9] bg-white text-[11px] text-[#444]">
      <header className="flex h-[25px] items-center bg-[#f37021] px-[10px] text-[11px] text-white">
        <h2 className="text-[12px] font-semibold">ULS 1(1)</h2>
        <span className="ml-[10px]">[ Load ]</span>
        <button type="button" className="ml-auto text-[12px] font-semibold">
          Copy
        </button>
        <button type="button" className="ml-[10px] text-[12px] font-semibold">
          Delete
        </button>
      </header>
      <div className="flex flex-1 flex-col items-start p-[10px]">
        <div className="border-r border-b border-[#ababab] pb-px">
          <table className="table-fixed border-collapse">
            <thead className="bg-[#f0f0f0]">
              <tr className="h-[34px]">
                <th className="w-[29px] border border-[#ababab]" aria-label="Select" />
                <th scope="col" className="w-[103px] border border-[#ababab] p-0 pt-[2px] pl-1 text-left font-semibold">
                  Member
                </th>
                {loadColumns.map((c) => (
                  <UnitHead key={c} text={c} width="w-[50px]" />
                ))}
              </tr>
            </thead>
            <tbody>
              {loadRows.map((r) => (
                <tr key={r[0]} className="h-[29px]">
                  <td className="border border-[#ababab]" />
                  {r.map((c, i) => (
                    <td key={i} className="border border-[#ababab] p-0 pt-[2px] pl-1 whitespace-nowrap">
                      {c}
                    </td>
                  ))}
                </tr>
              ))}
            </tbody>
          </table>
        </div>
        <p className="mt-[14px] max-w-[336px] leading-[15px]">
          Values in disabled cells are not taken into account in CBFEM analysis. Members can be loaded only by
          that components of internal forces which are defined in member "Model type".
        </p>
        <h3 className="mt-auto text-[13px] leading-[18px] font-semibold">Unbalanced forces</h3>
        <div className="border-r border-b border-[#ababab]">
          <table className="table-fixed border-collapse">
            <thead className="bg-[#f0f0f0]">
              <tr className="h-[34px]">
                {unbalancedColumns.map((c) => (
                  <UnitHead key={c} text={c} width="w-[55px]" />
                ))}
              </tr>
            </thead>
            <tbody>
              <tr className="h-[29px]">
                {unbalancedRow.map((c, i) => (
                  <td key={i} className="border border-[#ababab] p-0 pt-[2px] pl-1">
                    {c}
                  </td>
                ))}
              </tr>
            </tbody>
          </table>
        </div>
      </div>
    </aside>
  );
}

const status = [
  ["Design code:", "EN"],
  ["Analysis:", "Stress, strain"],
  ["Load effects:", "In equilibrium"],
  ["Units:", "mm"],
];

export default function App() {
  return (
    <div className="flex min-h-screen flex-col bg-[#c3c5c4] font-['Noto_Sans','Open_Sans',sans-serif] text-black">
      <Header />
      <Ribbon />
      <main className="flex flex-1 border-t border-[#b9b9b9]">
        <div className="relative flex min-w-0 flex-1 flex-col items-end border-r border-b border-l border-[#b9b9b9] bg-white pb-3">
          <Scene />
          <ViewToolbar />
          <p className="relative mt-[14px] mr-[129px] text-[11px] leading-4 font-semibold">
            <span className="text-[#f37021]">Production cost</span>
            <span className="mx-[6px]">-</span>
            138 €
          </p>
          <NavCube />
          <ModelTree />
        </div>
        <div className="w-[5px] bg-[#cbcbcb]" />
        <LoadPanel />
      </main>
      <footer className="flex h-8 shrink-0 items-center gap-4 px-2 text-[11px]">
        {status.map(([k, v]) => (
          <p key={k}>
            <span className="text-[#222]">{k}</span> <span className="font-medium">{v}</span>
          </p>
        ))}
      </footer>
    </div>
  );
}
